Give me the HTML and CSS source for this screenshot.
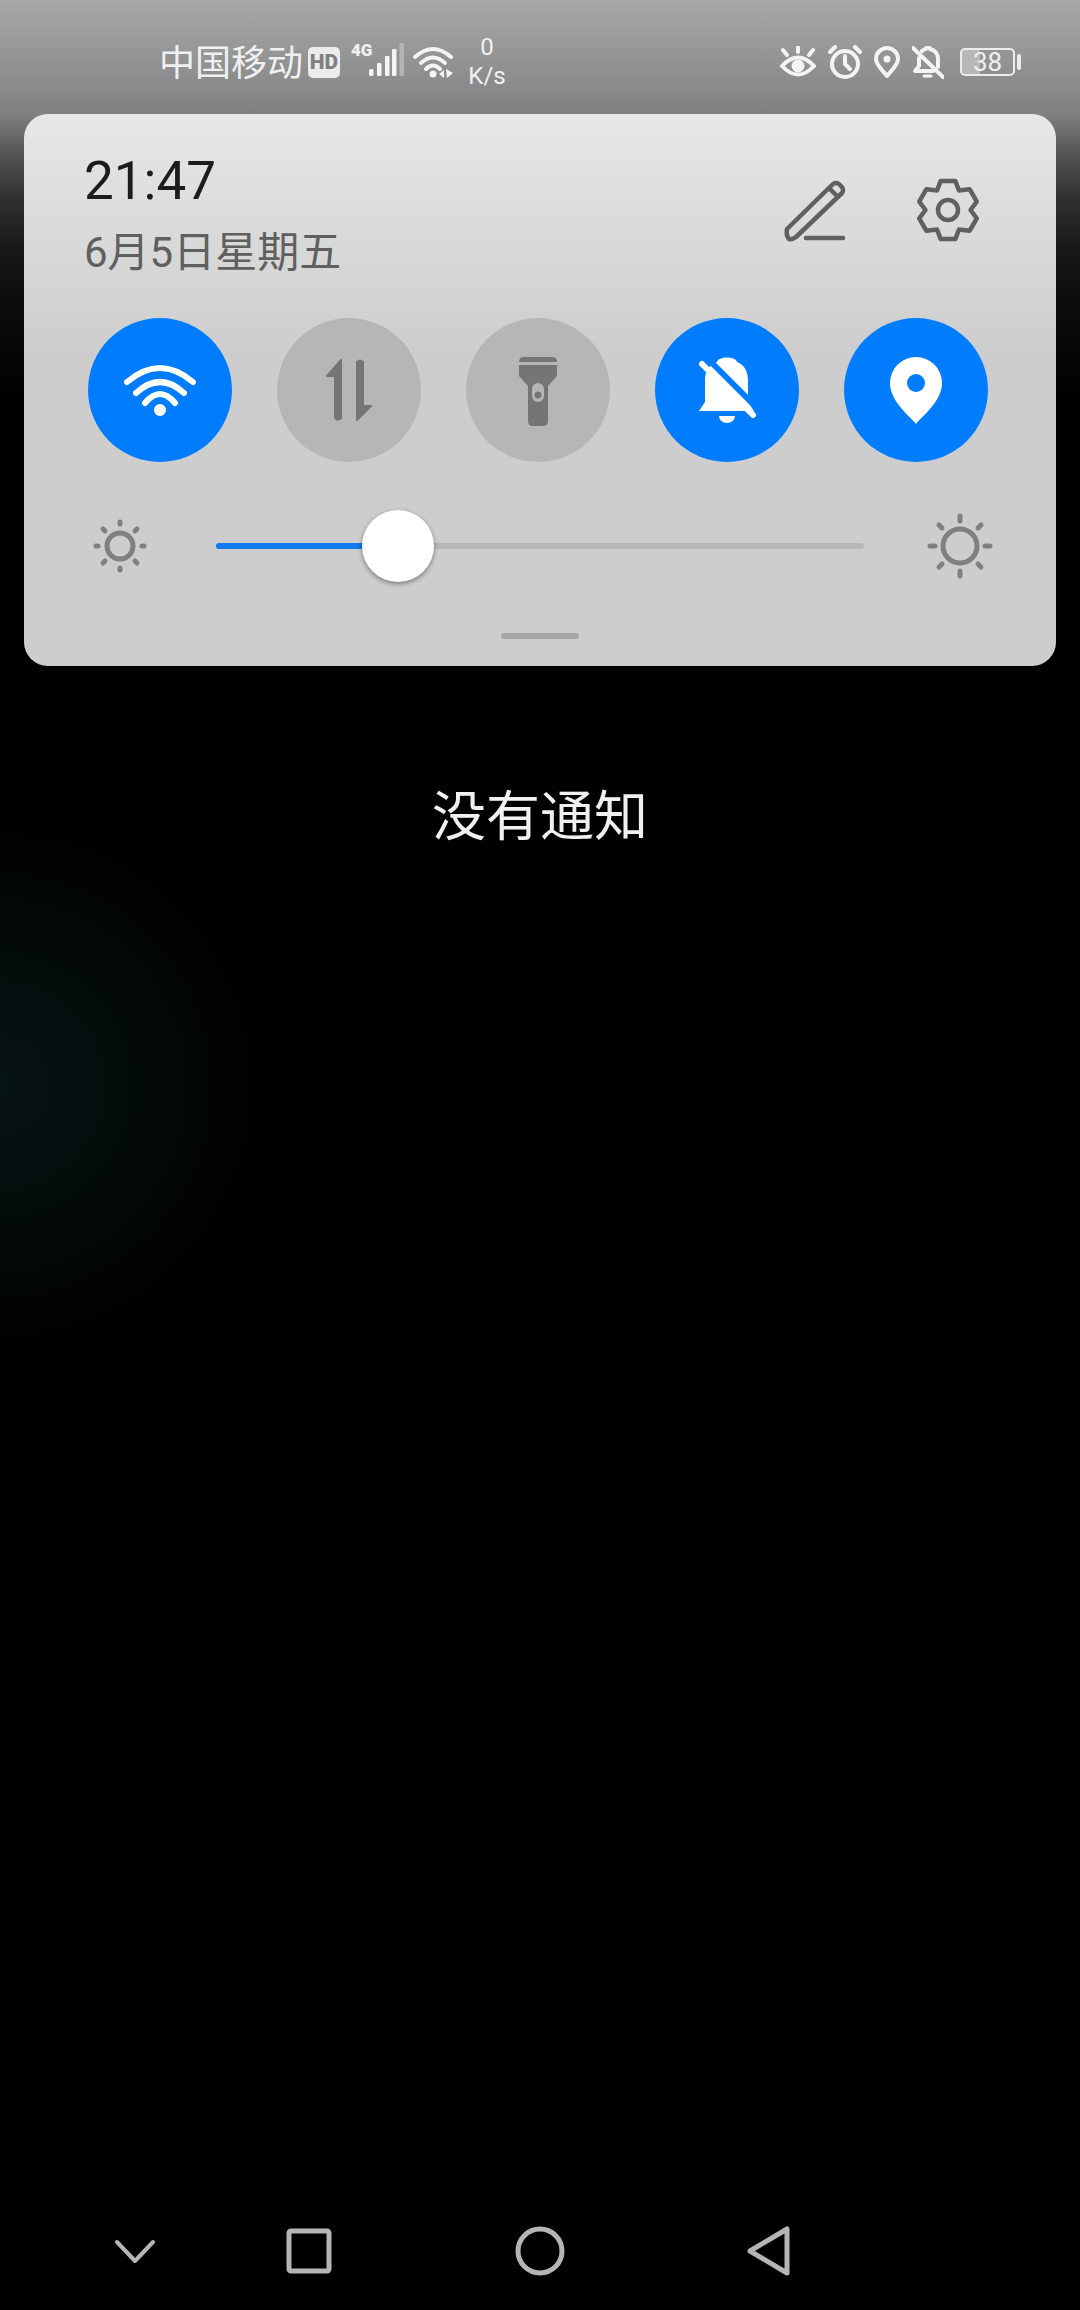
FILE: index.html
```html
<!DOCTYPE html>
<html lang="zh-CN">
<head>
  <meta charset="UTF-8" />
  <title>Notification Panel</title>
  <link rel="stylesheet" href="styles.css">
</head>
<body>

  <!-- Status bar -->
  <div class="status-bar">
    <div class="status-left">
      <span class="carrier">中国移动</span>
      <span class="hd">HD</span>
      <div class="signal">
        <span class="net">4G</span>
        <svg width="35" height="34" viewBox="0 0 35 34">
          <rect x="0" y="26" width="4.5" height="7" rx="1.5" fill="#f4f4f4"/>
          <rect x="8" y="20" width="4.5" height="13" rx="1" fill="#f4f4f4"/>
          <rect x="16" y="13" width="4.5" height="20" rx="1" fill="#f4f4f4"/>
          <rect x="23" y="6" width="4.5" height="27" rx="1" fill="#f4f4f4"/>
          <rect x="30.5" y="0" width="4.5" height="33" rx="1" fill="#b4b4b4"/>
        </svg>
      </div>
      <svg class="wifi-small" width="42" height="32" viewBox="0 0 42 32" fill="none" stroke="#f4f4f4" stroke-width="4" stroke-linecap="round">
        <path d="M2 11Q20 -5 38 11"/>
        <path d="M8 17Q20 6 32 17"/>
        <path d="M13 23Q20 16 27 23"/>
        <circle cx="20" cy="28" r="3.5" fill="#f4f4f4" stroke="none"/>
        <path d="M26 28l5-4v8zM33 23l7 4-6 5z" fill="#f4f4f4" stroke="none"/>
      </svg>
      <div class="speed">
        <span>0</span>
        <span>K/s</span>
      </div>
    </div>

    <div class="status-right">
      <svg width="36" height="32" viewBox="0 0 36 32" fill="none" stroke="#f4f4f4" stroke-width="4" stroke-linecap="round">
        <path d="M2 20Q18 3 34 20Q18 37 2 20Z"/>
        <circle cx="18" cy="20" r="6.5" fill="#f4f4f4" stroke="none"/>
        <path d="M18 1V6M3 4L7 9M33 4L29 9"/>
      </svg>
      <svg width="34" height="34" viewBox="0 0 34 34" fill="none" stroke="#f4f4f4" stroke-width="4" stroke-linecap="round">
        <circle cx="17" cy="19" r="13"/>
        <path d="M17 11V19L22 24M2 7L7 2M32 7L27 2"/>
      </svg>
      <svg width="26" height="32" viewBox="0 0 26 32" fill="none" stroke="#f4f4f4" stroke-width="4">
        <path d="M13 30C9 25 2 19 2 13A11 11 0 0 1 24 13C24 19 17 25 13 30Z" stroke-linejoin="round"/>
        <circle cx="13" cy="13" r="3.5" fill="#f4f4f4" stroke="none"/>
      </svg>
      <svg width="32" height="33" viewBox="0 0 32 33" fill="none" stroke="#f4f4f4" stroke-width="4" stroke-linecap="round" stroke-linejoin="round">
        <path d="M7 12V20L3 25H21"/>
        <path d="M10 5C12 3 13 3 14 3C14 1 18 1 18 3C23 4 26 8 26 13V21"/>
        <path d="M1 2L31 31"/>
        <path d="M12 30H19" stroke-width="3"/>
      </svg>
      <div class="battery">
        <div class="battery-body">38</div>
        <div class="battery-nub"></div>
      </div>
    </div>
  </div>

  <!-- Quick panel -->
  <div class="panel">
    <div class="panel-head">
      <div class="clock">
        <div class="time">21:47</div>
        <div class="date">6月5日星期五</div>
      </div>
      <div class="actions">
        <svg class="edit" width="62" height="62" viewBox="0 0 62 62" fill="none" stroke="#606060" stroke-width="4.5" stroke-linecap="round" stroke-linejoin="round">
          <path d="M3 49L49 4Q52 2 55 4L58 7Q60 10 58 13L12 57Q8 60 5 59Q2 56 3 49Z"/>
          <path d="M46 9L53 16"/>
          <path d="M22 58H59"/>
        </svg>
        <svg class="gear" width="66" height="66" viewBox="-33 -33 66 66" fill="none" stroke="#606060" stroke-width="4.5" stroke-linejoin="round">
          <polygon points="-7.3,-29.1 7.3,-29.1 11,-19.5 21.6,-20.8 28.8,-8.3 22.5,0 28.8,8.3 21.6,20.8 11,19.5 7.3,29.1 -7.3,29.1 -11,19.5 -21.6,20.8 -28.8,8.3 -22.5,0 -28.8,-8.3 -21.6,-20.8 -11,-19.5"/>
          <circle r="10"/>
        </svg>
      </div>
    </div>

    <div class="toggles">
      <div class="toggle on">
        <svg width="144" height="144" viewBox="0 0 144 144" fill="none" stroke="#fff" stroke-width="6" stroke-linecap="round">
          <path d="M39 64Q72 36 105 64"/>
          <path d="M48 75Q72 53 96 75"/>
          <path d="M57 85Q72 67 87 85"/>
          <circle cx="72" cy="92" r="6" fill="#fff" stroke="none"/>
        </svg>
      </div>
      <div class="toggle">
        <svg width="144" height="144" viewBox="0 0 144 144" fill="#757575" stroke="#757575" stroke-width="2" stroke-linejoin="round">
          <path d="M58 100V58H50L64 42V100Q61 103 58 100Z"/>
          <path d="M80 44V102L94 88H86V44Q83 41 80 44Z"/>
        </svg>
      </div>
      <div class="toggle">
        <svg width="144" height="144" viewBox="0 0 144 144">
          <path d="M53 44Q53 39 58 39H86Q91 39 91 44V44H53Z" fill="#757575"/>
          <path d="M53 47H91V58L82 68V103Q82 108 77 108H67Q62 108 62 103V68L53 58Z" fill="#757575"/>
          <rect x="66" y="65" width="12" height="19" rx="6" fill="#b5b5b5"/>
          <circle cx="72" cy="77" r="3.5" fill="#757575"/>
        </svg>
      </div>
      <div class="toggle on">
        <svg width="144" height="144" viewBox="0 0 144 144">
          <path d="M44 93L50 84V62C50 52 55 47 62 44C63 38 81 38 82 44C90 47 93 54 93 63V84L99 93Z" fill="#fff"/>
          <path d="M52 40L104 92" stroke="#007dff" stroke-width="6"/>
          <path d="M47 46L98 97" stroke="#fff" stroke-width="6" stroke-linecap="round"/>
          <path d="M64 98H80A8 7 0 0 1 64 98Z" fill="#fff"/>
        </svg>
      </div>
      <div class="toggle on">
        <svg width="144" height="144" viewBox="0 0 144 144">
          <path d="M72 106C67 99 46 84 46 65A26 26 0 0 1 98 65C98 84 77 99 72 106Z" fill="#fff"/>
          <circle cx="72" cy="65" r="9" fill="#007dff"/>
        </svg>
      </div>
    </div>

    <div class="brightness">
      <svg class="sun-low" width="54" height="54" viewBox="-27 -27 54 54" fill="none" stroke="#808080" stroke-width="5" stroke-linecap="round">
        <circle r="13"/>
        <path d="M0 -24V-22M0 22V24M-24 0H-22M22 0H24M-17 -17L-15 -15M15 15L17 17M-17 17L-15 15M15 -15L17 -17"/>
      </svg>
      <div class="track">
        <div class="track-fill"></div>
        <div class="thumb"></div>
      </div>
      <svg class="sun-high" width="66" height="66" viewBox="-33 -33 66 66" fill="none" stroke="#808080" stroke-width="5" stroke-linecap="round">
        <circle r="17"/>
        <path d="M0 -30V-25M0 25V30M-30 0H-25M25 0H30M-21 -21L-18 -18M18 18L21 21M-21 21L-18 18M18 -18L21 -21"/>
      </svg>
    </div>

    <div class="handle"></div>
  </div>

  <div class="empty">没有通知</div>

  <!-- Navigation bar -->
  <div class="nav">
    <svg width="42" height="25" viewBox="0 0 42 25" fill="none" stroke="#b5b5b5" stroke-width="4" stroke-linecap="round" stroke-linejoin="round">
      <path d="M3 3L21 22L39 3"/>
    </svg>
    <svg width="46" height="46" viewBox="0 0 46 46" fill="none" stroke="#b5b5b5" stroke-width="5" stroke-linejoin="round">
      <rect x="3" y="3" width="40" height="40" rx="2"/>
    </svg>
    <svg width="50" height="50" viewBox="0 0 50 50" fill="none" stroke="#b5b5b5" stroke-width="5">
      <circle cx="25" cy="25" r="22"/>
    </svg>
    <svg width="44" height="50" viewBox="0 0 44 50" fill="none" stroke="#b5b5b5" stroke-width="5" stroke-linejoin="round">
      <path d="M40 3V47L3 25Z"/>
    </svg>
  </div>

</body>
</html>
```

FILE: styles.css
```css
body {
  margin: 0;
  width: 1080px;
  height: 2310px;
  display: flex;
  flex-direction: column;
  overflow: hidden;
  font-family: Roboto, "Noto Sans CJK SC", sans-serif;
  background:
    radial-gradient(circle 270px at 0 1085px, #071414 0%, rgba(7, 20, 20, 0) 100%),
    linear-gradient(180deg, #a8a8a8 0px, #808182 114px, #585858 150px, #2f2f2f 200px, #181818 250px, #0d0d0d 300px, #000 400px);
}

/* Status bar */
.status-bar {
  height: 114px;
  box-sizing: border-box;
  padding: 10px 59px 0 159px;
  display: flex;
  justify-content: space-between;
  align-items: center;
  color: #f0f0f0;
}

.status-left {
  display: flex;
  align-items: center;
}

.status-right {
  display: flex;
  align-items: center;
  gap: 12px;
}

.carrier {
  margin-top: 4px;
  font-size: 36px;
  line-height: 40px;
}

.hd {
  margin-left: 5px;
  width: 32px;
  height: 31px;
  border-radius: 5px;
  background: #ececec;
  color: #808080;
  font-size: 21px;
  font-weight: 900;
  line-height: 31px;
  text-align: center;
}

.signal {
  position: relative;
  margin-left: 29px;
}

.net {
  position: absolute;
  left: -18px;
  top: -1px;
  font-size: 17px;
  font-weight: 900;
  line-height: 16px;
}

.wifi-small {
  margin-left: 9px;
}

.speed {
  margin-left: 10px;
  width: 44px;
  display: flex;
  flex-direction: column;
  align-items: center;
  font-size: 24px;
  line-height: 29px;
}

.battery {
  display: flex;
  align-items: center;
  gap: 2px;
  margin-left: 4px;
}

.battery-body {
  width: 51px;
  height: 24px;
  border: 2px solid #ececec;
  border-radius: 5px;
  background: linear-gradient(90deg, #b8b8b8 0, #b8b8b8 36%, transparent 36%);
  font-size: 26px;
  line-height: 24px;
  text-align: center;
}

.battery-nub {
  width: 4px;
  height: 16px;
  border-radius: 2px;
  background: #ececec;
}

/* Quick panel */
.panel {
  width: 1032px;
  height: 552px;
  margin-left: 24px;
  border-radius: 24px;
  background: linear-gradient(180deg, #e6e7e7 0, #cdcdcd 240px);
}

.panel-head {
  height: 204px;
  box-sizing: border-box;
  padding: 0 75px 0 60px;
  display: flex;
  justify-content: space-between;
}

.time {
  margin-top: 37px;
  font-size: 53px;
  line-height: 60px;
  color: #1c1c1c;
}

.date {
  margin-top: 17px;
  font-size: 42px;
  line-height: 50px;
  color: #5f5f5f;
}

.actions {
  display: flex;
  gap: 69px;
  align-items: flex-start;
}

.edit {
  margin-top: 66px;
}

.gear {
  margin-top: 63px;
}

.toggles {
  padding-left: 64px;
  display: flex;
  gap: 45px;
}

.toggle {
  width: 144px;
  height: 144px;
  border-radius: 50%;
  background: #b6b6b6;
}

.toggle.on {
  background: #007dff;
}

.toggle svg {
  display: block;
}

.brightness {
  height: 84px;
  margin-top: 42px;
  padding-left: 69px;
  display: flex;
  align-items: center;
}

.track {
  position: relative;
  width: 648px;
  height: 6px;
  margin-left: 69px;
  border-radius: 3px;
  background: #b9b9b9;
}

.track-fill {
  width: 180px;
  height: 6px;
  border-radius: 3px;
  background: #0f7bef;
}

.thumb {
  position: absolute;
  left: 146px;
  top: -33px;
  width: 72px;
  height: 72px;
  border-radius: 50%;
  background: #fff;
  box-shadow: 0 2px 5px rgba(0, 0, 0, 0.4);
}

.sun-high {
  margin-left: 63px;
}

.handle {
  width: 78px;
  height: 6px;
  margin: 45px auto 0;
  border-radius: 3px;
  background: #a6a6a6;
}

.empty {
  margin-top: 112px;
  text-align: center;
  font-size: 54px;
  line-height: 80px;
  color: #f0f0f0;
}

/* Navigation bar */
.nav {
  margin-top: auto;
  padding: 0 0 34px 51px;
  display: grid;
  grid-template-columns: 168px 180px 282px 176px;
  justify-items: center;
  align-items: center;
}
```
